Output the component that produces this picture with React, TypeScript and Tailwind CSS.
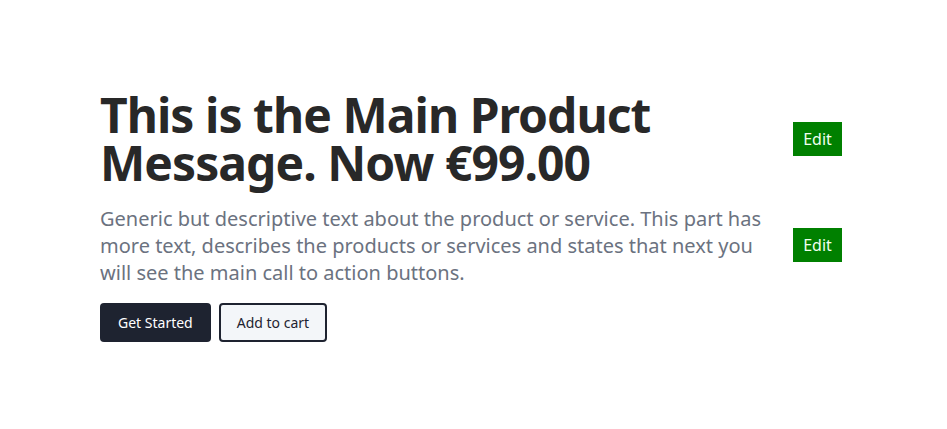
import React from "react"

function EditButton() {
  return (
    <button className="bg-[#008000] text-[#f0fff0] text-[16px] leading-none px-[10px] h-[34px] w-[49px] flex items-center justify-center shrink-0">
      Edit
    </button>
  )
}

export default function App() {
  return (
    <main
      className="min-h-screen w-full bg-white pt-[91px]"
      style={{ fontFamily: '"Noto Sans", "Open Sans", sans-serif' }}
    >
      <div className="w-full pl-[100px] pr-[105px] flex flex-col">
        {/* Heading row */}
        <div className="flex items-center justify-between">
          <h1 className="w-[670px] text-[48px] leading-[48px] font-bold tracking-[-0.02em] text-[#282828]">
            This is the Main Product Message. Now €99.00
          </h1>
          <EditButton />
        </div>

        {/* Description row */}
        <div className="flex items-center justify-between mt-[18px]">
          <p className="w-[670px] text-[20px] leading-[27px] text-[#6b7280]">
            Generic but descriptive text about the product or service. This part has more text, describes the products or services and states that next you will see the main call to action buttons.
          </p>
          <div className="-mt-[2px]">
            <EditButton />
          </div>
        </div>

        {/* Actions */}
        <div className="flex gap-[8px] mt-[17px]">
          <button className="h-[39px] px-[18px] rounded-[4px] bg-[#1e2330] text-white text-[14px]">
            Get Started
          </button>
          <button className="h-[39px] px-[16px] rounded-[4px] border-2 border-[#1e2330] bg-[#f3f6f9] text-[#1e2330] text-[14px]">
            Add to cart
          </button>
        </div>
      </div>
    </main>
  )
}
